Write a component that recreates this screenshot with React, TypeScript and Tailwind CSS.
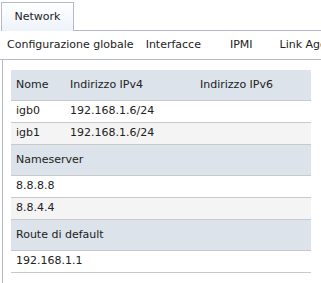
const font = { fontFamily: '"DejaVu Sans", Verdana, sans-serif' };

const nav = ["Configurazione globale", "Interfacce", "IPMI", "Link Aggregation"];

function HeadRow({ cells }: { cells: string[] }) {
  return (
    <div className="flex h-[31px] items-center whitespace-nowrap border-b border-[#c9c9c9] bg-[#dce3ea] pl-[5px] text-[#222]">
      {cells.length > 1 ? (
        <>
          <div className="w-[54px]">{cells[0]}</div>
          <div className="w-[130px]">{cells[1]}</div>
          <div>{cells[2]}</div>
        </>
      ) : (
        <div>{cells[0]}</div>
      )}
    </div>
  );
}

function Row({ cells, alt }: { cells: string[]; alt?: boolean }) {
  return (
    <div
      className={`flex h-[22px] items-center whitespace-nowrap border-b border-[#c9c9c9] pl-[5px] text-[#222] ${
        alt ? "bg-[#f4f4f4]" : "bg-white"
      }`}
    >
      <div className={cells.length > 1 ? "w-[54px]" : ""}>{cells[0]}</div>
      {cells.length > 1 && <div>{cells[1]}</div>}
    </div>
  );
}

export default function App() {
  return (
    <div className="h-[283px] w-[321px] overflow-hidden bg-white text-[11px]" style={font}>
      <div className="flex h-[31px] items-end pt-[2px]">
        <div className="ml-px flex h-[29px] w-[73px] items-center justify-center border-x border-t border-[#b4b9c8] bg-gradient-to-b from-white to-[#eef3fa] text-[#222]">
          Network
        </div>
        <div className="h-px flex-1 bg-[#b4b9c8]" />
      </div>
      <div className="flex h-[29px] items-center gap-[12px] overflow-hidden whitespace-nowrap border-b border-[#b4b9c8] pl-[7px] text-[#222]">
        <span>{nav[0]}</span>
        <span>{nav[1]}</span>
        <span className="ml-[17px]">{nav[2]}</span>
        <span className="ml-[15px]">{nav[3]}</span>
      </div>
      <div className="ml-[2px] h-full border-l border-[#b4b9c8] pl-[8px] pr-[9px] pt-[10px]">
        <div className="w-[300px]">
          <HeadRow cells={["Nome", "Indirizzo IPv4", "Indirizzo IPv6"]} />
          <Row cells={["igb0", "192.168.1.6/24"]} />
          <Row cells={["igb1", "192.168.1.6/24"]} alt />
          <HeadRow cells={["Nameserver"]} />
          <Row cells={["8.8.8.8"]} />
          <Row cells={["8.8.4.4"]} alt />
          <HeadRow cells={["Route di default"]} />
          <Row cells={["192.168.1.1"]} />
        </div>
      </div>
    </div>
  );
}
